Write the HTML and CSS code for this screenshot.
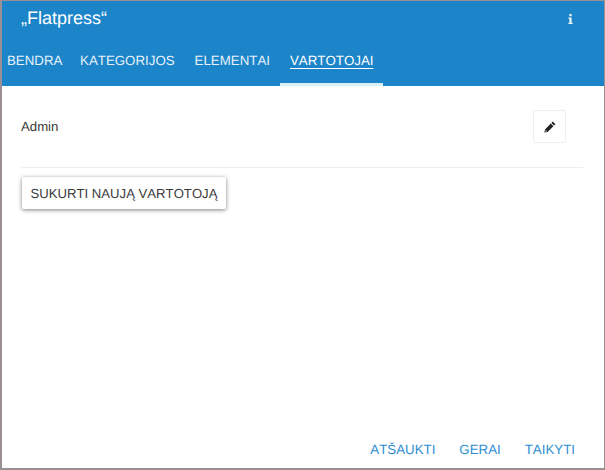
FILE: index.html
```html
<!DOCTYPE html>
<html lang="lt">
<head>
<meta charset="utf-8">
<title>Flatpress</title>
<link rel="stylesheet" href="styles.css">
</head>
<body>
<div class="dialog">
  <header class="head">
    <div class="title-row">
      <h1 class="title">„Flatpress“</h1>
      <svg class="info" viewBox="0 0 5 10" width="5" height="10" aria-label="Informacija"><path d="M1.4 0H3.6V2.2H1.4Z M.4 3.4H3.6V8.7H4.6V10H.4V8.7H1.4V4.7H.4Z" fill="#eef6fb"/></svg>
    </div>
    <nav class="tabs">
      <a class="tab">BENDRA</a>
      <a class="tab">KATEGORIJOS</a>
      <a class="tab">ELEMENTAI</a>
      <a class="tab active"><span class="tab-label">VARTOTOJAI</span></a>
    </nav>
  </header>
  <main class="content">
    <div class="user-row">
      <span class="user-name">Admin</span>
      <button class="edit-btn" type="button" aria-label="Redaguoti">
        <svg class="pencil" viewBox="0 0 12 12" width="12" height="12"><path d="M8.8.6 11.4 3.2 10 4.6 7.4 2Z M6.8 2.6 9.4 5.2 3.6 11 .4 11.6 1 8.4Z" fill="#222"/><circle cx="2" cy="10" r=".8" fill="#bbb"/></svg>
      </button>
    </div>
    <button class="create-btn" type="button">SUKURTI NAUJĄ VARTOTOJĄ</button>
  </main>
  <footer class="foot">
    <a class="action">ATŠAUKTI</a>
    <a class="action">GERAI</a>
    <a class="action">TAIKYTI</a>
  </footer>
</div>
</body>
</html>
```
FILE: styles.css
```css
* { box-sizing: border-box; }
html, body { margin: 0; height: 100%; }
body { font-family: "Liberation Sans", Arial, sans-serif; font-size: 13px; color: #333; font-kerning: none; text-rendering: geometricPrecision; }
.dialog {
  width: 605px; height: 470px;
  display: flex; flex-direction: column;
  border: solid #9a8f95;
  border-width: 1px 1px 2px 2px;
  background: #fff;
}
.head { background: #1c84c9; color: #fff; height: 85px; flex: none; display: flex; flex-direction: column; }
.title-row { height: 35px; display: flex; align-items: center; justify-content: space-between; padding: 0 31px 0 19px; flex: none; }
.title { margin: 0; font-size: 18px; font-weight: 400; color: #fff; }
.info { display: block; }
.tabs { display: flex; flex: 1; padding-top: 4px; }
.tab { padding: 13px 10px 0; color: #e6f1f9; font-size: 13.3px; border-bottom: 3px solid transparent; }
.tab:first-child { padding: 13px 7.6px 0 5px; }
.tab.active { border-bottom-color: #d8eff8; color: #fff; }
.tab-label { text-decoration: underline; text-underline-offset: 3px; }
.content { flex: 1; padding: 0 21px 0 19px; }
.user-row { height: 82px; display: flex; align-items: center; justify-content: space-between; padding: 0 17px 0 0; border-bottom: 1px solid #eee; }
.user-name { font-size: 13.2px; color: #3a3a3a; }
.edit-btn { width: 33px; height: 33px; padding: 0; background: #fff; border: 1px solid #eee; border-radius: 2px; display: flex; align-items: center; justify-content: center; }
.create-btn {
  display: block; margin: 9px 0 0 1px; height: 32px; width: 204px; padding: 0;
  background: #fff; border: 0; border-radius: 2px;
  font-family: inherit; font-size: 13.15px; color: #3a3a3a; font-kerning: none; text-rendering: geometricPrecision;
  box-shadow: 0 1px 4px rgba(0,0,0,.5);
}
.foot { flex: none; height: 46px; display: flex; justify-content: flex-end; gap: 24px; padding: 20px 29px 0 0; }
.action { color: #2e8ecf; font-size: 13.3px; }
```
